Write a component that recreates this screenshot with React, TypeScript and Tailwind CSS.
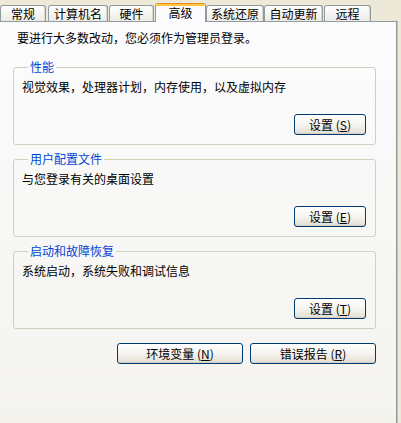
const tabs = [
  { label: "常规", cls: "w-[46px]" },
  { label: "计算机名", cls: "ml-[2px] w-[60px]" },
  { label: "硬件", cls: "ml-[1px] w-[45px]" },
  { label: "高级", cls: "ml-[1px] w-[51px]", active: true },
  { label: "系统还原", cls: "w-[58px]" },
  { label: "自动更新", cls: "w-[59px]" },
  { label: "远程", cls: "ml-[1px] w-[47px]" },
];

function XpButton({ label, hotkey, w }: { label: string; hotkey: string; w: string }) {
  return (
    <button
      className={`${w} h-[21px] rounded-[3px] border border-[#003c74] bg-gradient-to-b from-white via-[#f5f4f0] to-[#e2ded3] text-[12px] leading-[12px] text-black shadow-[inset_0_-1px_0_#d6d0c5]`}
    >
      {label} (<span className="underline">{hotkey}</span>)
    </button>
  );
}

function Group({ title, text, hotkey }: { title: string; text: string; hotkey: string }) {
  return (
    <fieldset className="w-[363px] rounded-[3px] border border-[#d0d0bf] px-[8px] pb-[9px]">
      <legend className="ml-[6px] px-[2px] text-[12px] leading-[12px] text-[#0046d5]">{title}</legend>
      <div className="mt-[8px] text-[12px] leading-[12px]">{text}</div>
      <div className="mt-[21px] flex justify-end pr-[1px]">
        <XpButton label="设置" hotkey={hotkey} w="w-[72px]" />
      </div>
    </fieldset>
  );
}

export default function App() {
  return (
    <div className="w-[401px] h-[423px] overflow-hidden bg-[#ece9d8] text-black font-['Noto_Sans_CJK_SC','Noto_Sans',sans-serif]">
      <div className="relative z-10 flex h-[21px] items-end">
        {tabs.map((t) =>
          t.active ? (
            <div
              key={t.label}
              className={`${t.cls} -mb-px flex h-[19px] flex-col overflow-hidden rounded-t-[3px] border-x border-[#919b9c] bg-[#fcfcfe]`}
            >
              <div className="h-[1px] bg-[#e68b2c]" />
              <div className="h-[2px] bg-[#ffc73c]" />
              <div className="flex flex-1 items-center justify-center pb-[3px] text-[12px] leading-[12px]">{t.label}</div>
            </div>
          ) : (
            <div
              key={t.label}
              className={`${t.cls} flex h-[16px] items-center justify-center rounded-t-[3px] border border-b-0 border-[#919b9c] bg-gradient-to-b from-white to-[#ecebe6] text-[12px] leading-[12px] shadow-[inset_-1px_0_0_#d8d7d0]`}
            >
              {t.label}
            </div>
          )
        )}
      </div>
      <div className="h-[402px] w-[397px] border-t border-r border-[#919b9c] bg-gradient-to-b from-[#fcfcfe] to-[#f4f3ee] shadow-[1px_0_0_#bcc3c6]">
        <div className="pl-[17px] pt-[10px] text-[12px] leading-[12px]">要进行大多数改动，您必须作为管理员登录。</div>
        <div className="mt-[17px] flex flex-col gap-[8px] pl-[13px]">
          <Group title="性能" text="视觉效果，处理器计划，内存使用，以及虚拟内存" hotkey="S" />
          <Group title="用户配置文件" text="与您登录有关的桌面设置" hotkey="E" />
          <Group title="启动和故障恢复" text="系统启动，系统失败和调试信息" hotkey="T" />
        </div>
        <div className="mt-[14px] flex w-[376px] justify-end gap-[7px] pl-[13px]">
          <XpButton label="环境变量" hotkey="N" w="w-[126px]" />
          <XpButton label="错误报告" hotkey="R" w="w-[126px]" />
        </div>
      </div>
    </div>
  );
}
